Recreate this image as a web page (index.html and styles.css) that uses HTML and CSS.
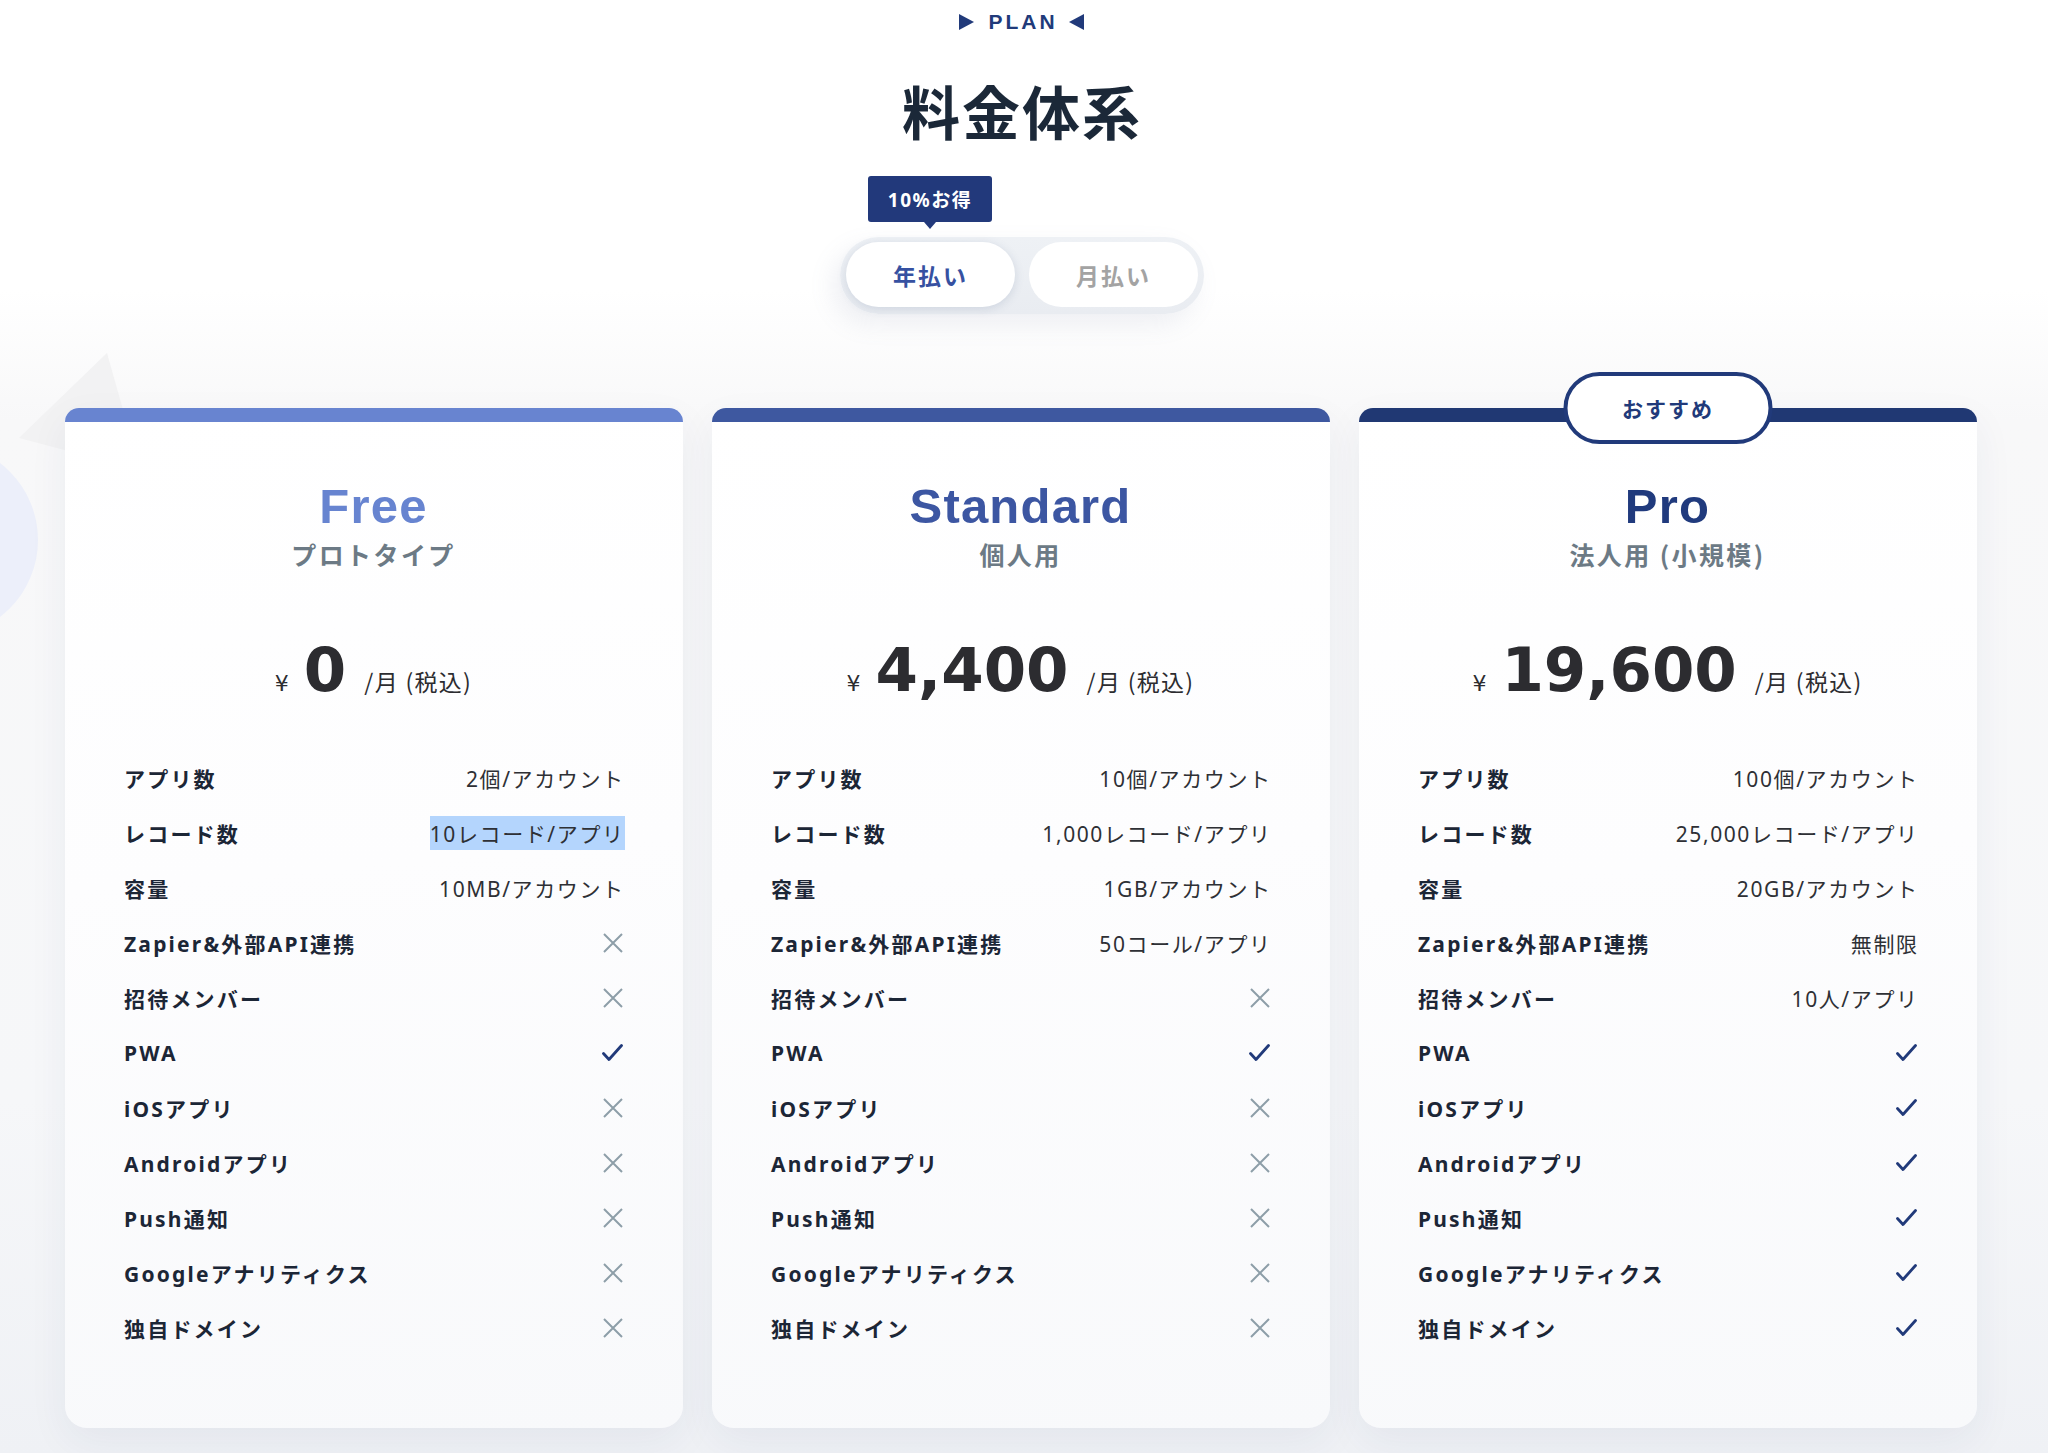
FILE: index.html
```html
<!DOCTYPE html>
<html lang="ja">
<head>
<meta charset="utf-8">
<title>料金体系</title>
<link rel="stylesheet" href="styles.css">
</head>
<body>
<section class="plan">
  <div class="deco">
    <svg class="deco-tri" width="160" height="140" viewBox="0 0 160 140"><polygon points="19,98 107,13 140,130" fill="#f2f2f3"/></svg>
    <div class="deco-circle"></div>
  </div>

  <div class="eyebrow">
    <span class="tri tri-r"></span>
    <span class="eyebrow-text">PLAN</span>
    <span class="tri tri-l"></span>
  </div>
  <h2 class="title">料金体系</h2>

  <div class="toggle">
    <div class="save-badge">10%お得</div>
    <button class="toggle-btn is-active">年払い</button>
    <button class="toggle-btn">月払い</button>
  </div>

  <div class="cards">
    <article class="card card-free">
      <div class="card-bar"></div>
      <div class="card-body">
        <h3 class="card-name">Free</h3>
        <p class="card-sub">プロトタイプ</p>
        <div class="price"><span class="yen">¥</span><span class="amount">0</span><span class="unit">/月 (税込)</span></div>
        <ul class="features">
          <li class="row"><span class="label">アプリ数</span><span class="val">2個/アカウント</span></li>
          <li class="row"><span class="label">レコード数</span><span class="val"><span class="selected">10レコード/アプリ</span></span></li>
          <li class="row"><span class="label">容量</span><span class="val">10MB/アカウント</span></li>
          <li class="row"><span class="label">Zapier&amp;外部API連携</span><span class="val"><svg class="ic-x" viewBox="0 0 20 20"><path d="M1 1L19 19M19 1L1 19"/></svg></span></li>
          <li class="row"><span class="label">招待メンバー</span><span class="val"><svg class="ic-x" viewBox="0 0 20 20"><path d="M1 1L19 19M19 1L1 19"/></svg></span></li>
          <li class="row"><span class="label">PWA</span><span class="val"><svg class="ic-check" viewBox="0 0 21 17"><path d="M1.5 9.5L7 15.5L19.5 1.5"/></svg></span></li>
          <li class="row"><span class="label">iOSアプリ</span><span class="val"><svg class="ic-x" viewBox="0 0 20 20"><path d="M1 1L19 19M19 1L1 19"/></svg></span></li>
          <li class="row"><span class="label">Androidアプリ</span><span class="val"><svg class="ic-x" viewBox="0 0 20 20"><path d="M1 1L19 19M19 1L1 19"/></svg></span></li>
          <li class="row"><span class="label">Push通知</span><span class="val"><svg class="ic-x" viewBox="0 0 20 20"><path d="M1 1L19 19M19 1L1 19"/></svg></span></li>
          <li class="row"><span class="label">Googleアナリティクス</span><span class="val"><svg class="ic-x" viewBox="0 0 20 20"><path d="M1 1L19 19M19 1L1 19"/></svg></span></li>
          <li class="row"><span class="label">独自ドメイン</span><span class="val"><svg class="ic-x" viewBox="0 0 20 20"><path d="M1 1L19 19M19 1L1 19"/></svg></span></li>
        </ul>
      </div>
    </article>

    <article class="card card-standard">
      <div class="card-bar"></div>
      <div class="card-body">
        <h3 class="card-name">Standard</h3>
        <p class="card-sub">個人用</p>
        <div class="price"><span class="yen">¥</span><span class="amount">4,400</span><span class="unit">/月 (税込)</span></div>
        <ul class="features">
          <li class="row"><span class="label">アプリ数</span><span class="val">10個/アカウント</span></li>
          <li class="row"><span class="label">レコード数</span><span class="val">1,000レコード/アプリ</span></li>
          <li class="row"><span class="label">容量</span><span class="val">1GB/アカウント</span></li>
          <li class="row"><span class="label">Zapier&amp;外部API連携</span><span class="val">50コール/アプリ</span></li>
          <li class="row"><span class="label">招待メンバー</span><span class="val"><svg class="ic-x" viewBox="0 0 20 20"><path d="M1 1L19 19M19 1L1 19"/></svg></span></li>
          <li class="row"><span class="label">PWA</span><span class="val"><svg class="ic-check" viewBox="0 0 21 17"><path d="M1.5 9.5L7 15.5L19.5 1.5"/></svg></span></li>
          <li class="row"><span class="label">iOSアプリ</span><span class="val"><svg class="ic-x" viewBox="0 0 20 20"><path d="M1 1L19 19M19 1L1 19"/></svg></span></li>
          <li class="row"><span class="label">Androidアプリ</span><span class="val"><svg class="ic-x" viewBox="0 0 20 20"><path d="M1 1L19 19M19 1L1 19"/></svg></span></li>
          <li class="row"><span class="label">Push通知</span><span class="val"><svg class="ic-x" viewBox="0 0 20 20"><path d="M1 1L19 19M19 1L1 19"/></svg></span></li>
          <li class="row"><span class="label">Googleアナリティクス</span><span class="val"><svg class="ic-x" viewBox="0 0 20 20"><path d="M1 1L19 19M19 1L1 19"/></svg></span></li>
          <li class="row"><span class="label">独自ドメイン</span><span class="val"><svg class="ic-x" viewBox="0 0 20 20"><path d="M1 1L19 19M19 1L1 19"/></svg></span></li>
        </ul>
      </div>
    </article>

    <article class="card card-pro">
      <div class="card-bar"></div>
      <div class="reco-badge">おすすめ</div>
      <div class="card-body">
        <h3 class="card-name">Pro</h3>
        <p class="card-sub">法人用 (小規模)</p>
        <div class="price"><span class="yen">¥</span><span class="amount">19,600</span><span class="unit">/月 (税込)</span></div>
        <ul class="features">
          <li class="row"><span class="label">アプリ数</span><span class="val">100個/アカウント</span></li>
          <li class="row"><span class="label">レコード数</span><span class="val">25,000レコード/アプリ</span></li>
          <li class="row"><span class="label">容量</span><span class="val">20GB/アカウント</span></li>
          <li class="row"><span class="label">Zapier&amp;外部API連携</span><span class="val">無制限</span></li>
          <li class="row"><span class="label">招待メンバー</span><span class="val">10人/アプリ</span></li>
          <li class="row"><span class="label">PWA</span><span class="val"><svg class="ic-check" viewBox="0 0 21 17"><path d="M1.5 9.5L7 15.5L19.5 1.5"/></svg></span></li>
          <li class="row"><span class="label">iOSアプリ</span><span class="val"><svg class="ic-check" viewBox="0 0 21 17"><path d="M1.5 9.5L7 15.5L19.5 1.5"/></svg></span></li>
          <li class="row"><span class="label">Androidアプリ</span><span class="val"><svg class="ic-check" viewBox="0 0 21 17"><path d="M1.5 9.5L7 15.5L19.5 1.5"/></svg></span></li>
          <li class="row"><span class="label">Push通知</span><span class="val"><svg class="ic-check" viewBox="0 0 21 17"><path d="M1.5 9.5L7 15.5L19.5 1.5"/></svg></span></li>
          <li class="row"><span class="label">Googleアナリティクス</span><span class="val"><svg class="ic-check" viewBox="0 0 21 17"><path d="M1.5 9.5L7 15.5L19.5 1.5"/></svg></span></li>
          <li class="row"><span class="label">独自ドメイン</span><span class="val"><svg class="ic-check" viewBox="0 0 21 17"><path d="M1.5 9.5L7 15.5L19.5 1.5"/></svg></span></li>
        </ul>
      </div>
    </article>
  </div>
</section>
</body>
</html>
```

FILE: styles.css
```css
* { box-sizing: border-box; }
html, body { margin: 0; padding: 0; }
body {
  font-family: "Noto Sans CJK JP", "Noto Sans", sans-serif;
  color: #1c2636;
  background: #ffffff;
}

.plan {
  position: relative;
  min-height: 1453px;
  overflow: hidden;
  display: flex;
  flex-direction: column;
  align-items: center;
  padding-top: 7px;
  background: linear-gradient(180deg, #ffffff 0px, #ffffff 290px, #f8f8f9 420px, #f6f7f9 1100px, #eff1f5 1453px);
}

.deco { position: absolute; inset: 0; pointer-events: none; }
.deco-tri { position: absolute; left: 0; top: 340px; }
.deco-circle {
  position: absolute;
  left: -156px;
  top: 443px;
  width: 194px;
  height: 194px;
  border-radius: 50%;
  background: #eceffa;
}

.eyebrow {
  position: relative;
  display: flex;
  align-items: center;
  gap: 14px;
  height: 30px;
  margin-left: -5px;
}
.eyebrow-text {
  font-family: "Liberation Sans", Arial, sans-serif;
  font-weight: 700;
  font-size: 21px;
  letter-spacing: 3px;
  color: #213a7a;
  line-height: 30px;
  margin-right: -3px;
}
.tri { width: 0; height: 0; border-top: 8px solid transparent; border-bottom: 8px solid transparent; }
.tri-r { border-left: 15px solid #213a7a; }
.tri-l { border-right: 15px solid #213a7a; }

.title {
  position: relative;
  margin: 38px 0 0;
  font-size: 58px;
  line-height: 70px;
  font-weight: 700;
  letter-spacing: 2px;
  color: #1b2838;
  margin-left: -4px;
}

.toggle {
  position: relative;
  margin-top: 92px;
  margin-left: -4px;
  display: flex;
  gap: 14px;
  padding: 5px 6px 7px 6px;
  border-radius: 40px;
  background: linear-gradient(180deg, #eef1f5, #e9ecf1);
  box-shadow: -8px 10px 24px rgba(120, 135, 165, 0.12);
}
.toggle-btn {
  width: 169px;
  height: 65px;
  border: none;
  border-radius: 33px;
  background: #ffffff;
  font-family: "Noto Sans CJK JP", sans-serif;
  font-size: 23px;
  font-weight: 700;
  letter-spacing: 2px;
  color: #a3a3a3;
  padding: 0;
}
.toggle-btn.is-active {
  color: #3651a1;
  box-shadow: 0 2px 10px rgba(80, 100, 140, 0.18);
}

.save-badge {
  position: absolute;
  left: 28px;
  top: -61px;
  width: 124px;
  height: 46px;
  border-radius: 3px;
  background: #22397b;
  color: #ffffff;
  font-family: "Noto Sans", "Noto Sans CJK JP", sans-serif;
  font-size: 19px;
  font-weight: 700;
  letter-spacing: 1.5px;
  display: flex;
  align-items: center;
  justify-content: center;
}
.save-badge::after {
  content: "";
  position: absolute;
  left: 56px;
  bottom: -7px;
  border-left: 6px solid transparent;
  border-right: 6px solid transparent;
  border-top: 7px solid #22397b;
}

.cards {
  position: relative;
  margin-top: 94px;
  width: 1912px;
  margin-left: -6px;
  display: grid;
  grid-template-columns: repeat(3, 618px);
  gap: 29px;
}

.card {
  position: relative;
  height: 1020px;
  border-radius: 14px 14px 22px 22px;
  background: linear-gradient(175deg, #ffffff 0%, #fdfdfe 45%, #f8f9fb 100%);
  box-shadow: 0 14px 40px rgba(40, 55, 95, 0.06);
}
.card-bar {
  height: 14px;
  border-radius: 14px 14px 0 0;
}
.card-free .card-bar { background: #6884d0; }
.card-standard .card-bar { background: #3e58a0; }
.card-pro .card-bar { background: #203873; }

.card-body {
  padding: 54px 60px 0 59px;
  display: flex;
  flex-direction: column;
  align-items: stretch;
}
.card-name {
  margin: 0;
  text-align: center;
  font-family: "Liberation Sans", Arial, sans-serif;
  font-weight: 700;
  font-size: 49px;
  letter-spacing: 1.2px;
  line-height: 60px;
}
.card-free .card-name { color: #6784d0; }
.card-standard .card-name { color: #3c56a2; }
.card-pro .card-name { color: #203a7d; }

.card-sub {
  margin: 0;
  text-align: center;
  font-size: 25px;
  line-height: 36px;
  font-weight: 700;
  letter-spacing: 2.4px;
  color: #6c7a85;
}

.price {
  margin-top: 67px;
  display: flex;
  justify-content: center;
  align-items: baseline;
  color: #2c2c30;
}
.yen {
  font-family: "DejaVu Sans", sans-serif;
  font-size: 22px;
  margin-right: 15px;
}
.amount {
  font-family: "DejaVu Sans", sans-serif;
  font-weight: 700;
  font-size: 61px;
  line-height: 61px;
}
.unit {
  font-size: 23px;
  margin-left: 18px;
  letter-spacing: 1.3px;
}

.features {
  list-style: none;
  margin: 50px 0 0;
  padding: 0;
}
.row {
  height: 55px;
  display: flex;
  align-items: center;
  justify-content: space-between;
}
.label {
  font-family: "Noto Sans", "Noto Sans CJK JP", sans-serif;
  font-size: 21px;
  font-weight: 700;
  letter-spacing: 2.2px;
  color: #1c2636;
}
.val {
  display: flex;
  align-items: center;
  font-family: "Noto Sans", "Noto Sans CJK JP", sans-serif;
  font-size: 21px;
  letter-spacing: 1.6px;
  color: #2e3035;
  margin-right: -1.6px;
}
.selected {
  background: #b4d5fd;
  padding: 2px 0;
}
.ic-x {
  width: 20px;
  height: 20px;
  fill: none;
  stroke: #8d9ea8;
  stroke-width: 2;
  margin-right: 1.6px;
}
.ic-check {
  width: 21px;
  height: 17px;
  fill: none;
  stroke: #213a7a;
  stroke-width: 2.8;
  stroke-linecap: round;
  stroke-linejoin: round;
  margin-right: 1.6px;
}

.reco-badge {
  position: absolute;
  left: 50%;
  top: -36px;
  transform: translateX(-50%);
  width: 209px;
  height: 72px;
  border: 4px solid #213a7a;
  border-radius: 36px;
  background: #ffffff;
  color: #213a7a;
  font-size: 21px;
  font-weight: 700;
  letter-spacing: 2px;
  display: flex;
  align-items: center;
  justify-content: center;
}
```
